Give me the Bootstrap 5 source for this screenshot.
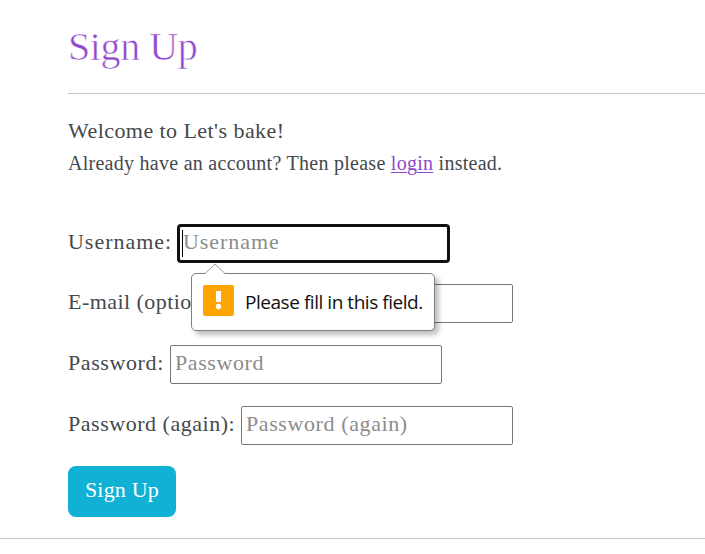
<!DOCTYPE html>
<html lang="en">
<head>
<meta charset="utf-8">
<meta name="viewport" content="width=device-width, initial-scale=1">
<title>Sign Up</title>
<link href="https://cdn.jsdelivr.net/npm/bootstrap@5.3.0/dist/css/bootstrap.min.css" rel="stylesheet">
<style>
body{font-family:"Source Serif Pro","Liberation Serif",serif;font-size:22px;color:#45484c;background:#fff;overflow:hidden}
.page{padding-left:68px}
.title{font-size:40px;line-height:48px;letter-spacing:-.4px;color:#9147cf;font-weight:400;-webkit-text-stroke:.6px #fff;padding-top:23px;height:93px}
.rule{height:1px;background:#c4c4c4}
.welcome{line-height:33px;letter-spacing:.44px;margin-top:20px;height:34px}
.sub{font-size:20px;line-height:30px;letter-spacing:.27px;height:76px;white-space:nowrap}
.sub a{color:#9147cf;text-decoration-thickness:1px;text-underline-offset:2px}
.field{height:39px;margin-bottom:22px;line-height:36px;white-space:nowrap}
.field-first,.field-last{margin-bottom:21px}
.field label{height:39px;letter-spacing:.6px}
.field input{width:272px;height:39px;border:1px solid #767676;border-radius:2px;padding:0 4px 3px;font:inherit;letter-spacing:.6px;outline:0;background:#fff}
.field input::placeholder{color:#8c8c8c;opacity:1}
.field .active-input{width:273px;height:39px;border:3px solid #101010;border-radius:4px;padding:0 3px 4px;letter-spacing:.95px}
.l-user{width:109px}.l-mail{width:173px}.l-pass{width:102px}.l-again{width:173px}
.field .l-user{letter-spacing:.98px}.field .l-mail{letter-spacing:.45px}.field .l-again{letter-spacing:.53px}
.caret{left:114px;top:6px;width:1px;height:27px;background:#000}
.tip{left:123px;top:49px;width:244px;height:58px;border:1px solid #808080;border-radius:5px;background:#fff;box-shadow:4px 4px 5px rgba(0,0,0,.25);font:19px/56px "Segoe UI","Open Sans",sans-serif;letter-spacing:-.46px;color:#111;padding-left:11px;z-index:2}
.tip .arrow{left:12px;top:-12px}
.tip-icon{margin-top:-3px}
.tip-text{margin-left:11px}
.submit{width:108px;height:51px;background:#10b1d5;color:#fff;border:0;border-radius:8px;font-size:22px;line-height:33px;letter-spacing:.2px;padding:0 0 5px}
.submit:hover{background:#10b1d5;color:#fff}
.foot{margin-top:21px}
</style>
</head>
<body>
<main>
<div class="page">
<h1 class="title mb-0">Sign Up</h1>
<div class="rule"></div>
<p class="welcome mb-0">Welcome to Let's bake!</p>
<p class="sub mb-0">Already have an account? Then please <a href="#">login</a> instead.</p>
<form>
<div class="field field-first d-flex position-relative">
<label class="l-user" for="user">Username:</label><input id="user" class="active-input" type="text" placeholder="Username">
<span class="caret position-absolute"></span>
<div class="tip position-absolute d-flex align-items-center" role="alert">
<svg class="arrow position-absolute" width="22" height="13" viewBox="0 0 22 13"><path d="M1 12 11 2l10 10v1H1Z" fill="#fff"/><path d="M1 11.5 11 2l10 9.5" fill="none" stroke="#999"/></svg>
<svg class="tip-icon flex-shrink-0" width="31" height="31" viewBox="0 0 31 31"><rect width="31" height="31" rx="2" fill="#ffa400"/><path d="M13 6h5v11h-5z" fill="#fff"/><circle cx="15.5" cy="21.5" r="2.7" fill="#fff"/></svg>
<span class="tip-text">Please fill in this field.</span>
</div>
</div>
<div class="field d-flex"><label class="l-mail" for="mail">E-mail (optional):</label><input id="mail" type="text"></div>
<div class="field d-flex"><label class="l-pass" for="pass">Password:</label><input id="pass" type="password" placeholder="Password"></div>
<div class="field field-last d-flex"><label class="l-again" for="again">Password (again):</label><input id="again" type="password" placeholder="Password (again)"></div>
<button class="btn submit d-block" type="button">Sign Up</button>
</form>
</div>
<div class="rule foot"></div>
</main>
<script src="https://cdn.jsdelivr.net/npm/bootstrap@5.3.0/dist/js/bootstrap.bundle.min.js"></script>
</body>
</html>
